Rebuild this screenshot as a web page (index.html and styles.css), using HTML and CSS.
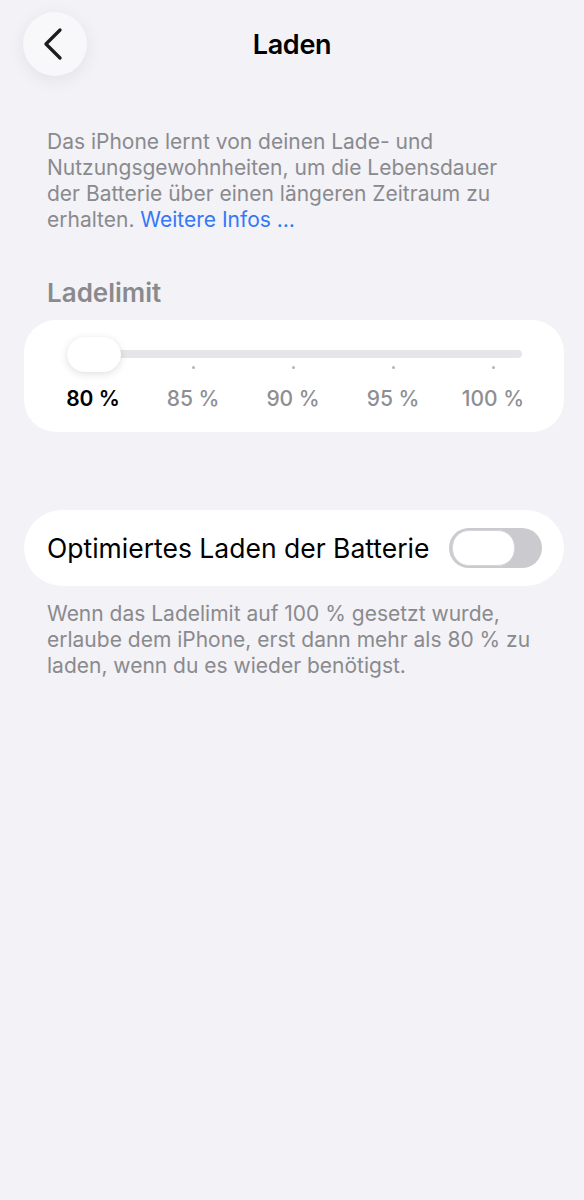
FILE: index.html
```html
<!DOCTYPE html>
<html lang="de">
<head>
    <meta charset="UTF-8">
    <meta name="viewport" content="width=device-width, initial-scale=1.0">
    <title>Laden</title>
    <link rel="stylesheet" href="styles.css">
</head>
<body>
    <header class="nav-bar">
        <button class="back-button" aria-label="Zurück">
            <svg width="20" height="32" viewBox="0 0 20 32">
                <path d="M17 2 L3 16 L17 30" fill="none" stroke="#1c1c1e" stroke-width="3.2" stroke-linecap="round" stroke-linejoin="round"/>
            </svg>
        </button>
        <h1 class="nav-title">Laden</h1>
    </header>

    <main>
        <p class="intro">
            Das iPhone lernt von deinen Lade- und Nutzungsgewohnheiten, um die Lebensdauer der Batterie über einen längeren Zeitraum zu erhalten. <a href="#" class="link">Weitere Infos …</a>
        </p>

        <h2 class="section-title">Ladelimit</h2>

        <div class="card limit-card">
            <div class="slider">
                <div class="slider-track"></div>
                <div class="slider-ticks">
                    <span></span>
                    <span class="tick"></span>
                    <span class="tick"></span>
                    <span class="tick"></span>
                    <span class="tick"></span>
                </div>
                <div class="slider-thumb"></div>
            </div>
            <div class="slider-labels">
                <span class="active">80 %</span>
                <span>85 %</span>
                <span>90 %</span>
                <span>95 %</span>
                <span>100 %</span>
            </div>
        </div>

        <div class="card toggle-card">
            <span class="toggle-label">Optimiertes Laden der Batterie</span>
            <div class="switch">
                <div class="switch-knob"></div>
            </div>
        </div>

        <p class="footnote">
            Wenn das Ladelimit auf 100 % gesetzt wurde, erlaube dem iPhone, erst dann mehr als 80 % zu laden, wenn du es wieder benötigst.
        </p>
    </main>
</body>
</html>
```

FILE: styles.css
```css
body {
    font-family: 'Inter', 'Noto Sans', sans-serif;
    margin: 0;
    padding: 0;
    background-color: #f2f2f7;
    color: #000;
    min-height: 1200px;
}

.nav-bar {
    display: flex;
    align-items: center;
    justify-content: center;
    position: relative;
    height: 88px;
}

.back-button {
    position: absolute;
    left: 23px;
    top: 12px;
    width: 64px;
    height: 64px;
    border-radius: 50%;
    border: none;
    background-color: #f8f8fa;
    box-shadow: 0 4px 18px rgba(0, 0, 0, 0.07);
    display: flex;
    align-items: center;
    justify-content: center;
    padding: 0 4px 0 0;
}

.nav-title {
    margin: 0;
    font-size: 27px;
    font-weight: 600;
    letter-spacing: -0.3px;
}

.intro {
    margin: 41px 0 0;
    padding: 0 50px 0 47px;
    font-size: 21px;
    line-height: 26px;
    color: #8a8a8e;
}

.link {
    color: #3478f6;
    text-decoration: none;
}

.section-title {
    margin: 45px 0 12px;
    padding-left: 47px;
    font-size: 26px;
    line-height: 30px;
    font-weight: 600;
    color: #8a8a8e;
}

.card {
    background-color: #fff;
    margin: 0 20px 0 24px;
}

.limit-card {
    border-radius: 32px;
    padding: 17px 21px 21px 19px;
}

.slider {
    position: relative;
    padding-top: 13px;
}

.slider-track {
    height: 8px;
    margin: 0 21px 0 24px;
    border-radius: 4px;
    background-color: #e5e5ea;
}

.slider-ticks {
    display: grid;
    grid-template-columns: repeat(5, 100px);
    height: 3px;
    margin-top: 8px;
}

.slider-ticks span {
    display: flex;
    justify-content: center;
}

.slider-ticks .tick::before {
    content: "";
    width: 3px;
    height: 3px;
    border-radius: 50%;
    background-color: #b4b4b8;
}

.slider-thumb {
    position: absolute;
    left: 24px;
    top: 0;
    width: 54px;
    height: 35px;
    border-radius: 18px;
    background-color: #fff;
    box-shadow: 0 2px 8px rgba(0, 0, 0, 0.12), 0 0 1px rgba(0, 0, 0, 0.08);
}

.slider-labels {
    display: grid;
    grid-template-columns: repeat(5, 100px);
    margin-top: 18px;
    font-size: 21px;
    line-height: 24px;
    font-weight: 500;
    color: #8e8e93;
    text-align: center;
}

.slider-labels .active {
    color: #000;
    font-weight: 600;
}

.toggle-card {
    margin-top: 78px;
    height: 76px;
    border-radius: 38px;
    display: flex;
    align-items: center;
    justify-content: space-between;
    padding: 0 22px 0 23px;
}

.toggle-label {
    font-size: 26.5px;
}

.switch {
    width: 93px;
    height: 40px;
    border-radius: 20px;
    background-color: #cbcbcf;
    display: flex;
    align-items: center;
    padding-left: 3px;
    box-sizing: border-box;
}

.switch-knob {
    width: 61px;
    height: 34px;
    border-radius: 17px;
    background-color: #fff;
    border: 1px solid #d6d6da;
}

.footnote {
    margin: 15px 0 0;
    padding: 0 50px 0 47px;
    font-size: 21px;
    line-height: 26px;
    color: #8a8a8e;
}
```
